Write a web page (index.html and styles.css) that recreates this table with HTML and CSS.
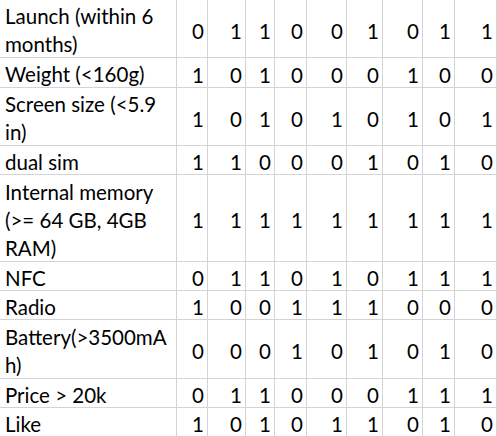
FILE: index.html
```html
<!DOCTYPE html>
<html>
<head>
<meta charset="utf-8">
<link rel="stylesheet" href="styles.css">
</head>
<body>
<div class="sheet">
  <div class="cell label">Launch (within 6<br>months)</div>
  <div class="cell num">0</div><div class="cell num">1</div><div class="cell num">1</div><div class="cell num">0</div><div class="cell num">0</div><div class="cell num">1</div><div class="cell num">0</div><div class="cell num">1</div><div class="cell num">1</div>

  <div class="cell label">Weight (&lt;160g)</div>
  <div class="cell num">1</div><div class="cell num">0</div><div class="cell num">1</div><div class="cell num">0</div><div class="cell num">0</div><div class="cell num">0</div><div class="cell num">1</div><div class="cell num">0</div><div class="cell num">0</div>

  <div class="cell label">Screen size (&lt;5.9<br>in)</div>
  <div class="cell num">1</div><div class="cell num">0</div><div class="cell num">1</div><div class="cell num">0</div><div class="cell num">1</div><div class="cell num">0</div><div class="cell num">1</div><div class="cell num">0</div><div class="cell num">1</div>

  <div class="cell label">dual sim</div>
  <div class="cell num">1</div><div class="cell num">1</div><div class="cell num">0</div><div class="cell num">0</div><div class="cell num">0</div><div class="cell num">1</div><div class="cell num">0</div><div class="cell num">1</div><div class="cell num">0</div>

  <div class="cell label">Internal memory<br>(&gt;= 64 GB, 4GB<br>RAM)</div>
  <div class="cell num">1</div><div class="cell num">1</div><div class="cell num">1</div><div class="cell num">1</div><div class="cell num">1</div><div class="cell num">1</div><div class="cell num">1</div><div class="cell num">1</div><div class="cell num">1</div>

  <div class="cell label">NFC</div>
  <div class="cell num">0</div><div class="cell num">1</div><div class="cell num">1</div><div class="cell num">0</div><div class="cell num">1</div><div class="cell num">0</div><div class="cell num">1</div><div class="cell num">1</div><div class="cell num">1</div>

  <div class="cell label">Radio</div>
  <div class="cell num">1</div><div class="cell num">0</div><div class="cell num">0</div><div class="cell num">1</div><div class="cell num">1</div><div class="cell num">1</div><div class="cell num">0</div><div class="cell num">0</div><div class="cell num">0</div>

  <div class="cell label">Battery(&gt;3500mA<br>h)</div>
  <div class="cell num">0</div><div class="cell num">0</div><div class="cell num">0</div><div class="cell num">1</div><div class="cell num">0</div><div class="cell num">1</div><div class="cell num">0</div><div class="cell num">1</div><div class="cell num">0</div>

  <div class="cell label">Price &gt; 20k</div>
  <div class="cell num">0</div><div class="cell num">1</div><div class="cell num">1</div><div class="cell num">0</div><div class="cell num">0</div><div class="cell num">0</div><div class="cell num">1</div><div class="cell num">1</div><div class="cell num">1</div>

  <div class="cell label">Like</div>
  <div class="cell num">1</div><div class="cell num">0</div><div class="cell num">1</div><div class="cell num">0</div><div class="cell num">1</div><div class="cell num">1</div><div class="cell num">0</div><div class="cell num">1</div><div class="cell num">0</div>
</div>
</body>
</html>
```
FILE: styles.css
```css
html, body {
  margin: 0;
  padding: 0;
  background: #ffffff;
}

.sheet {
  display: grid;
  grid-template-columns: 177px 31px 38px 29px 32px 40px 36px 40px 32px 42px;
  grid-template-rows: 58px 30px 58px 29px 87px 29px 29px 59px 29px 29px;
  width: 497px;
  font-family: "Lato", "Open Sans", sans-serif;
  font-size: 20.5px;
  color: #000000;
}

.cell {
  box-sizing: border-box;
  border-right: 1px solid #d4d4d4;
  border-bottom: 1px solid #d4d4d4;
  display: flex;
  align-items: center;
  line-height: 28px;
  white-space: nowrap;
}

.label {
  padding: 3px 0 0 5px;
}

.num {
  justify-content: flex-end;
  padding: 4px 3px 0 0;
}
```
